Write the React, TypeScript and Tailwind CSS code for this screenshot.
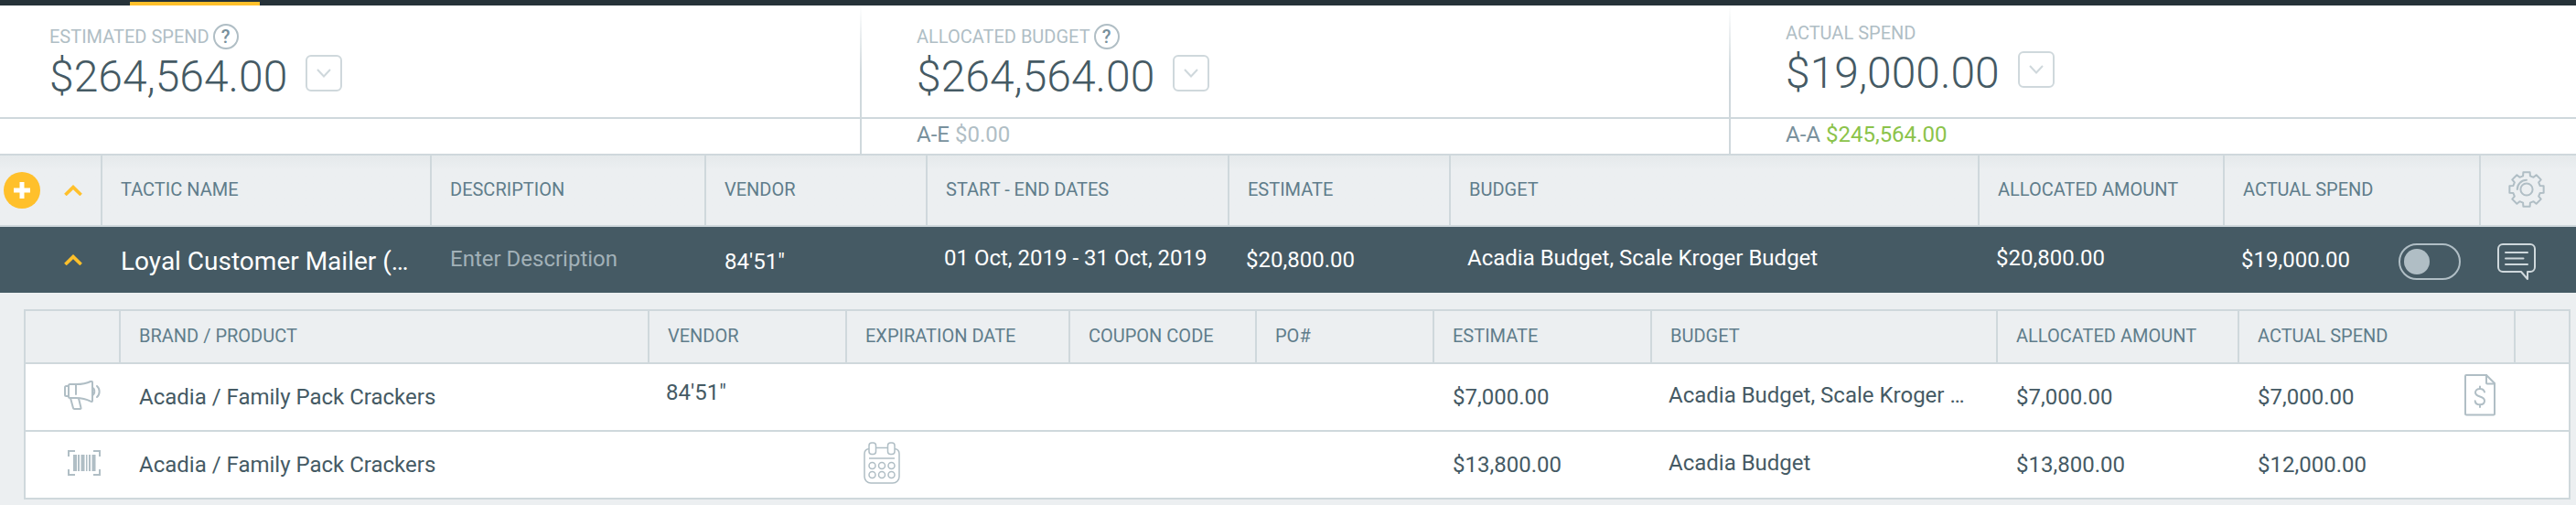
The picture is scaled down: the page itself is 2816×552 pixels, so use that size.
import React from 'react';

interface Kpi {
  label: string;
  value: string;
  help?: boolean;
  delta?: { name: string; value: string; tone: string };
}

interface Product {
  id: number;
  type: 'media' | 'coupon';
  name: string;
  vendor?: string;
  estimate: string;
  budget: string;
  allocated: string;
  actual: string;
  invoice?: boolean;
}

const kpis: Kpi[] = [
  { label: 'ESTIMATED SPEND', value: '$264,564.00', help: true },
  {
    label: 'ALLOCATED BUDGET',
    value: '$264,564.00',
    help: true,
    delta: { name: 'A-E', value: '$0.00', tone: 'text-[#b0bec5]' },
  },
  {
    label: 'ACTUAL SPEND',
    value: '$19,000.00',
    delta: { name: 'A-A', value: '$245,564.00', tone: 'text-[#8bc34a]' },
  },
];

const products: Product[] = [
  {
    id: 1,
    type: 'media',
    name: 'Acadia / Family Pack Crackers',
    vendor: `84'51"`,
    estimate: '$7,000.00',
    budget: 'Acadia Budget, Scale Kroger …',
    allocated: '$7,000.00',
    actual: '$7,000.00',
    invoice: true,
  },
  {
    id: 2,
    type: 'coupon',
    name: 'Acadia / Family Pack Crackers',
    estimate: '$13,800.00',
    budget: 'Acadia Budget',
    allocated: '$13,800.00',
    actual: '$12,000.00',
  },
];

// Eight teeth around (20, 20): [angle offset in degrees, radius] for one tooth
const toothShape = [
  [-15, 15.2],
  [-11, 19],
  [11, 19],
  [15, 15.2],
];

const gearPoints = Array.from({ length: 8 }, (_, i) =>
  toothShape.map(([offset, r]) => {
    const angle = ((i * 45 + offset) * Math.PI) / 180;
    return `${(20 + r * Math.sin(angle)).toFixed(2)},${(20 - r * Math.cos(angle)).toFixed(2)}`;
  })
)
  .flat()
  .join(' ');

const Chevron: React.FC = () => (
  <svg width="20" height="12" viewBox="0 0 20 12" fill="none" stroke="#ffc02b" strokeWidth="3.6">
    <path d="M1.4 11 10 2.6 18.6 11" />
  </svg>
);

const GearIcon: React.FC = () => (
  <svg width="40" height="40" viewBox="0 0 40 40" fill="none" stroke="#b0bec5" strokeWidth="2" strokeLinejoin="round" strokeLinecap="round">
    <polygon points={gearPoints} />
    <circle cx="20" cy="20" r="6.6" />
    <path d="M9.800 20A10.200 10.200 0 0 1 20 9.800" />
  </svg>
);

const CommentIcon: React.FC = () => (
  <svg width="42" height="40" viewBox="0 0 42 40" fill="none" stroke="#cfd8dc" strokeWidth="2" strokeLinejoin="round" strokeLinecap="round">
    <path d="M6 1h30a5 5 0 0 1 5 5v20a5 5 0 0 1-5 5h-3v8l-7-8H6a5 5 0 0 1-5-5V6a5 5 0 0 1 5-5z" />
    <path d="M9 10h24M9 16.500h19.500M9 23h24" />
  </svg>
);

const MegaphoneIcon: React.FC = () => (
  <svg width="40" height="32" viewBox="0 0 40 32" fill="none" stroke="#b0bec5" strokeWidth="2" strokeLinejoin="round" strokeLinecap="round">
    <path d="M5 6H2.500A1.500 1.500 0 0 0 1 7.500v8A1.500 1.500 0 0 0 2.500 17H5" />
    <path d="M5 5.500A1.500 1.500 0 0 1 6.500 4H13c7 0 12-1 16-3 1.200-.4 2 0 2 1v20c0 1-.8 1.300-2 .7-4-2.200-9-3.700-16-3.700H6.500A1.500 1.500 0 0 1 5 17.500z" />
    <path d="M13 5v10M7 19l3 11c.2.700.6 1 1.200 1H17.500c.8 0 1.200-.5 1-1.200L16 19.500M31 8c3 .5 3 7 0 8M36 6c3.500 3 3.500 9 0 12" />
  </svg>
);

const BarcodeIcon: React.FC = () => (
  <svg width="36" height="28" viewBox="0 0 36 28" fill="#b0bec5">
    <path d="M1 7V1h7M28 1h7v6M35 21v6h-7M8 27H1v-6" fill="none" stroke="#b0bec5" strokeWidth="2" />
    <path d="M6 5h4v18H6zM11 5h2v18h-2zM14.500 5h4v18h-4zM20 5h1.500v18H20zM23 5h2v18h-2zM26.500 5h4v18h-4z" />
  </svg>
);

const CalendarIcon: React.FC = () => (
  <svg width="40" height="46" viewBox="0 0 40 46" fill="none" stroke="#b0bec5" strokeWidth="1.500">
    <path d="M6 7.500C3 8 1 10 1 13v25a7 7 0 0 0 7 7h24a7 7 0 0 0 7-7V13c0-3-2-5-5-5.500M14 6.500h12" />
    <rect x="6" y="1" width="7.500" height="12.500" rx="3" />
    <rect x="26.500" y="1" width="7.500" height="12.500" rx="3" />
    <path d="M6 18h28" />
    {[26, 36].map((cy) => [9.5, 20, 30.5].map((cx) => <circle key={`${cx}-${cy}`} cx={cx} cy={cy} r="3.500" />))}
  </svg>
);

const InvoiceIcon: React.FC = () => (
  <svg width="34" height="46" viewBox="0 0 34 46" fill="none" stroke="#b0bec5" strokeWidth="2" strokeLinejoin="round" strokeLinecap="round">
    <path d="M2 1h22l9 9v33a1.500 1.500 0 0 1-1.500 1.500h-29A1.500 1.500 0 0 1 1 43V2a1 1 0 0 1 1-1z" />
    <path d="M24 1v8.500a1 1 0 0 0 1 1h8" />
    <path d="M22 19.500c-.5-2-2.300-3.500-5-3.500s-5 1.500-5 4c0 6 10 3 10 9 0 2.500-2 4.300-5 4.300s-5-1.500-5.300-4M17 13.500V16M17 33.500V36" />
  </svg>
);

const mainHeaders = [
  'TACTIC NAME',
  'DESCRIPTION',
  'VENDOR',
  'START - END DATES',
  'ESTIMATE',
  'BUDGET',
  'ALLOCATED AMOUNT',
  'ACTUAL SPEND',
];

const subHeaders = [
  '',
  'BRAND / PRODUCT',
  'VENDOR',
  'EXPIRATION DATE',
  'COUPON CODE',
  'PO#',
  'ESTIMATE',
  'BUDGET',
  'ALLOCATED AMOUNT',
  'ACTUAL SPEND',
];

const KpiCard: React.FC<{ kpi: Kpi; first: boolean }> = ({ kpi, first }) => (
  <div
    className={
      first
        ? 'h-[122px] pt-5 pl-[54px]'
        : 'h-[122px] bg-linear-to-b from-transparent to-[#cfd8dc] to-60% bg-[length:2px_100%] bg-no-repeat pt-5 pl-[62px]'
    }
  >
    <div className={`flex gap-1 text-xl text-[#b0bec5] ${kpi.help ? 'h-7 items-center' : 'h-6 items-start'}`}>
      <span className="leading-5">{kpi.label}</span>
      {kpi.help && (
        <button
          aria-label={`About ${kpi.label.toLowerCase()}`}
          className="flex size-7 items-center justify-center rounded-full border-2 border-[#b0bec5] font-medium text-[#78909c]"
        >
          ?
        </button>
      )}
    </div>
    <div className="flex items-center gap-5 pt-0.5">
      <span className="text-5xl leading-[56px] font-light">{kpi.value}</span>
      <button
        aria-label={`${kpi.label.toLowerCase()} details`}
        className="mb-2 flex size-10 items-center justify-center rounded-md border-2 border-[#cfd8dc]"
      >
        <svg width="16" height="10" viewBox="0 0 16 10" fill="none" stroke="#cfd8dc" strokeWidth="2">
          <path d="M1 1l7 7.500L15 1" />
        </svg>
      </button>
    </div>
  </div>
);

const TacticTable: React.FC = () => (
  <table className="w-full table-fixed border-separate border-spacing-0 text-left text-2xl">
    <colgroup>
      <col className="w-[112px]" />
      <col className="w-[360px]" />
      <col className="w-[300px]" />
      <col className="w-[242px]" />
      <col className="w-[330px]" />
      <col className="w-[242px]" />
      <col className="w-[578px]" />
      <col className="w-[268px]" />
      <col className="w-[280px]" />
      <col className="w-[104px]" />
    </colgroup>
    <thead className="bg-linear-to-b from-[#e5e9eb] to-[#eceff1] to-20%">
      <tr className="h-[78px] text-xl text-[#607d8b]">
        <th className="border-r-2 border-b-2 border-[#cfd8dc] p-0 pl-1">
          <div className="flex items-center gap-[26px]">
            <button aria-label="Add tactic" className="flex size-10 items-center justify-center rounded-full bg-[#ffc02b]">
              <svg width="18" height="18" viewBox="0 0 18 18" fill="none" stroke="#fff" strokeWidth="5">
                <path d="M9 0v18M0 9h18" />
              </svg>
            </button>
            <button aria-label="Collapse all">
              <Chevron />
            </button>
          </div>
        </th>
        {mainHeaders.map((header) => (
          <th key={header} className="border-r-2 border-b-2 border-[#cfd8dc] p-0 pb-0.5 pl-5 font-normal whitespace-nowrap">
            {header}
          </th>
        ))}
        <th className="border-b-2 border-[#cfd8dc] p-0 pb-0.5 pl-[30px]">
          <button aria-label="Column settings" className="block">
            <GearIcon />
          </button>
        </th>
      </tr>
    </thead>
    <tbody>
      <tr className="h-[72px] bg-[#455a64] whitespace-nowrap text-white">
        <td className="p-0 pl-[70px]">
          <button aria-label="Collapse tactic" className="block">
            <Chevron />
          </button>
        </td>
        <td className="truncate p-0 pt-1 pl-5 text-[28px]">Loyal Customer Mailer (…</td>
        <td className="p-0 pb-0.5 pl-5">
          <input
            aria-label="Description"
            placeholder="Enter Description"
            className="block w-full bg-transparent placeholder:text-[#a2b1b8] outline-none"
          />
        </td>
        <td className="p-0 pt-1 pl-5">84'51"</td>
        <td className="p-0 pb-1 pl-[18px]">01 Oct, 2019 - 31 Oct, 2019</td>
        <td className="p-0 pl-[18px]">$20,800.00</td>
        <td className="p-0 pb-1 pl-[18px]">Acadia Budget, Scale Kroger Budget</td>
        <td className="p-0 pb-1 pl-[18px]">$20,800.00</td>
        <td className="p-0 pl-[18px]">
          <div className="flex items-center justify-between pr-[22px]">
            <span>$19,000.00</span>
            <input
              type="checkbox"
              role="switch"
              aria-label="Lock actual spend"
              className="mt-1 flex h-10 w-[68px] appearance-none items-center rounded-full border-2 border-[#b0bec5] px-1 before:size-7 before:rounded-full before:bg-[#b0bec5] checked:justify-end"
            />
          </div>
        </td>
        <td className="p-0 pt-1 pl-[18px]">
          <button aria-label="Comments" className="block">
            <CommentIcon />
          </button>
        </td>
      </tr>
      <tr>
        <td colSpan={10} className="p-0 pt-[18px] pr-[6px] pl-[26px]">
          <ProductTable />
        </td>
      </tr>
    </tbody>
  </table>
);

const ProductTable: React.FC = () => (
  <table className="w-full table-fixed border-separate border-spacing-0 border-2 border-b-0 border-[#cfd8dc] text-left">
    <colgroup>
      <col className="w-[104px]" />
      <col className="w-[578px]" />
      <col className="w-[216px]" />
      <col className="w-[244px]" />
      <col className="w-[204px]" />
      <col className="w-[194px]" />
      <col className="w-[238px]" />
      <col className="w-[378px]" />
      <col className="w-[264px]" />
      <col className="w-[302px]" />
      <col className="w-[58px]" />
    </colgroup>
    <thead>
      <tr className="h-[58px] text-xl text-[#607d8b]">
        {subHeaders.map((header) => (
          <th key={header} className="border-r-2 border-b-2 border-[#cfd8dc] p-0 pb-0.5 pl-5 font-normal whitespace-nowrap">
            {header}
          </th>
        ))}
        <th className="border-b-2 border-[#cfd8dc] p-0" />
      </tr>
    </thead>
    <tbody>
      {products.map((product) => (
        <tr key={product.id} className="h-[74px] bg-white whitespace-nowrap *:border-b-2 *:border-[#cfd8dc]">
          <td className="p-0 pr-[22px] pb-1">
            <div className="flex justify-end">{product.type === 'media' ? <MegaphoneIcon /> : <BarcodeIcon />}</div>
          </td>
          <td className="p-0 pl-5">{product.name}</td>
          <td className="p-0 pb-2.5 pl-[18px]">{product.vendor}</td>
          <td className="p-0 pb-1 pl-[18px]">
            {product.type === 'coupon' && (
              <button aria-label="Pick expiration date" className="block">
                <CalendarIcon />
              </button>
            )}
          </td>
          <td className="p-0" />
          <td className="p-0" />
          <td className="p-0 pl-5">{product.estimate}</td>
          <td className="truncate p-0 pb-1 pl-[18px]">{product.budget}</td>
          <td className="p-0 pl-5">{product.allocated}</td>
          <td className="p-0 pl-5">
            <div className="flex items-center justify-between pr-[22px]">
              <span>{product.actual}</span>
              {product.invoice && (
                <button aria-label="Open invoice" className="mb-1">
                  <InvoiceIcon />
                </button>
              )}
            </div>
          </td>
          <td className="p-0" />
        </tr>
      ))}
    </tbody>
  </table>
);

const App: React.FC = () => {
  return (
    <div className="min-h-screen bg-[#eceff1] font-[Roboto,sans-serif] text-[#455a64]">
      {/* Nav bar edge with the active tab marker */}
      <div className="flex h-[6px] items-end bg-[#263238] pl-[142px]">
        <div className="h-1 w-[142px] bg-[#ffc02b]" />
      </div>

      {/* Spend summary */}
      <div className="grid grid-cols-[940fr_950fr_926fr] border-b-2 border-[#cfd8dc] bg-white">
        {kpis.map((kpi, i) => (
          <KpiCard key={kpi.label} kpi={kpi} first={i === 0} />
        ))}
      </div>
      <div className="grid h-10 grid-cols-[940fr_950fr_926fr] border-b-2 border-[#cfd8dc] bg-white text-2xl">
        {kpis.map((kpi, i) => (
          <div
            key={kpi.label}
            className={i === 0 ? '' : 'flex items-center gap-1.5 border-l-2 border-[#cfd8dc] pb-1 pl-[60px]'}
          >
            {kpi.delta && (
              <>
                <span className="text-[#78909c]">{kpi.delta.name}</span>
                <span className={kpi.delta.tone}>{kpi.delta.value}</span>
              </>
            )}
          </div>
        ))}
      </div>

      {/* Tactics */}
      <TacticTable />
    </div>
  );
};

export default App;
